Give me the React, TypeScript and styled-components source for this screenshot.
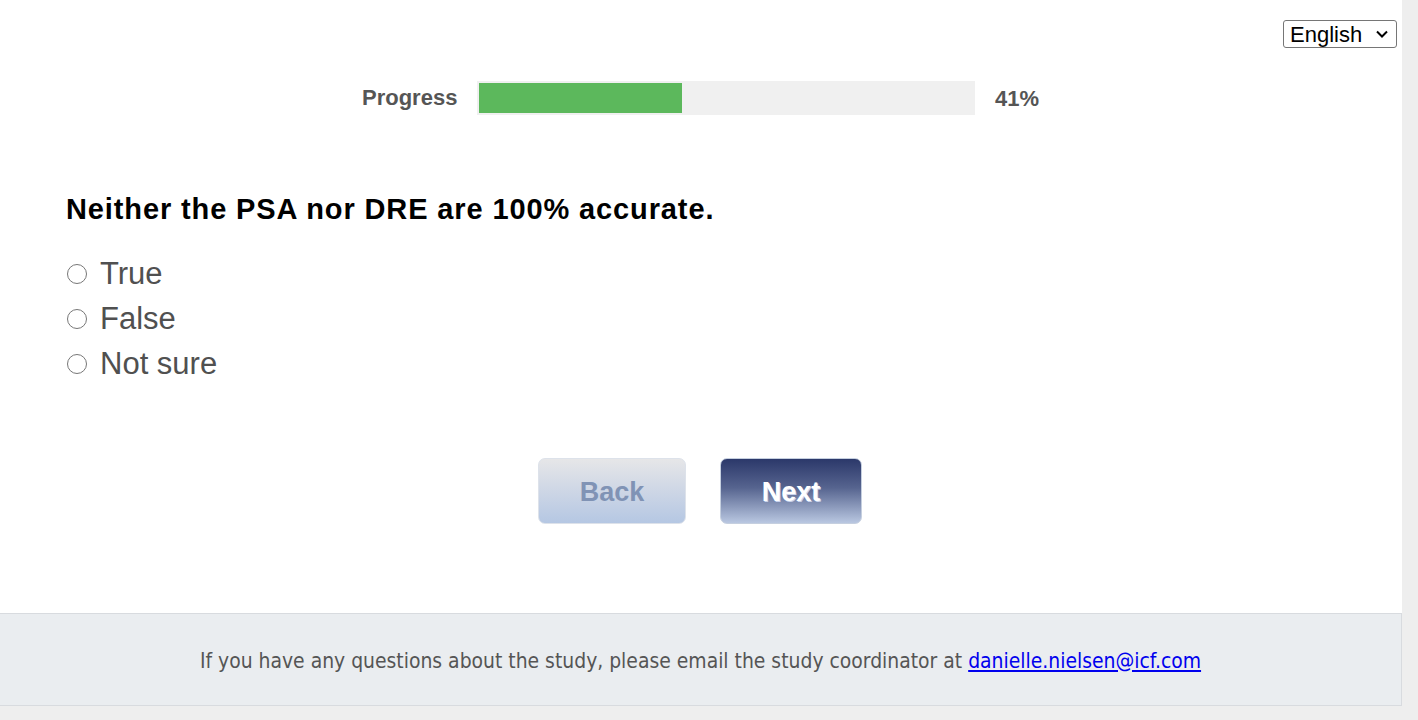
import React from "react";
import styled, { createGlobalStyle } from "styled-components";

const Global = createGlobalStyle`
  html, body { margin: 0; padding: 0; background: #eeeeee; }
  body { font-family: "Liberation Sans", Arial, sans-serif; }
`;

const Page = styled.div`
  width: 1402px;
  background: #ffffff;
`;

const Main = styled.div`
  height: 613px;
  display: flex;
  flex-direction: column;
`;

const TopBar = styled.div`
  display: flex;
  justify-content: flex-end;
  padding: 20px 5px 0 0;
`;

const SelectWrap = styled.div`
  position: relative;
  width: 114px;
  height: 28px;
`;

const LangSelect = styled.select`
  appearance: none;
  -webkit-appearance: none;
  font-family: "Liberation Sans", Arial, sans-serif;
  font-size: 22px;
  height: 28px;
  width: 114px;
  border: 1px solid #767676;
  border-radius: 3px;
  background: #fff;
  color: #000;
  padding: 0 0 0 6px;
  outline: none;
`;

const Chevron = styled.svg`
  position: absolute;
  right: 8px;
  top: 9px;
  width: 14px;
  height: 10px;
  pointer-events: none;
`;

const ProgressRow = styled.div`
  display: flex;
  align-items: center;
  margin: 33px 0 0 362px;
`;

const ProgressLabel = styled.span`
  font-size: 22px;
  font-weight: bold;
  color: #555;
  width: 115px;
`;

const Track = styled.div`
  width: 494px;
  height: 30px;
  padding: 2px;
  background: #f0f0f0;
`;

const Fill = styled.div`
  height: 100%;
  background: #5cb85c;
`;

const Percent = styled.span`
  font-size: 22px;
  font-weight: bold;
  color: #555;
  margin-left: 20px;
  margin-top: 1px;
`;

const Question = styled.h2`
  margin: 78px 0 0 66px;
  font-size: 29px;
  letter-spacing: 0.88px;
  font-weight: bold;
  color: #000;
  line-height: 32px;
`;

const Options = styled.div`
  margin: 26px 0 0 67px;
  display: flex;
  flex-direction: column;
`;

const Option = styled.label`
  display: flex;
  align-items: center;
  height: 45px;
  font-size: 31px;
  color: #505050;
  cursor: pointer;
`;

const Radio = styled.span`
  width: 20px;
  height: 20px;
  border: 1.5px solid #777;
  border-radius: 50%;
  box-sizing: border-box;
  margin-right: 13px;
  margin-top: 1px;
  flex: none;
`;

const Buttons = styled.div`
  display: flex;
  justify-content: center;
  gap: 34px;
  margin: 72px 0 0 0;
  padding-right: 2px;
`;

const NavButton = styled.button<{ $primary?: boolean }>`
  width: ${(p) => (p.$primary ? "142px" : "148px")};
  height: 66px;
  border-radius: 7px;
  border: 1px solid ${(p) => (p.$primary ? "#c5cfdf" : "#dde2ea")};
  font-family: "Liberation Sans", Arial, sans-serif;
  font-size: 27px;
  font-weight: bold;
  background: ${(p) =>
    p.$primary
      ? "linear-gradient(to bottom, #2b386a 0%, #56648f 45%, #b9c7e1 100%)"
      : "linear-gradient(to bottom, #e6e6e8 0%, #b5c7e3 100%)"};
  color: ${(p) => (p.$primary ? "#ffffff" : "#8093b5")};
  text-shadow: ${(p) => (p.$primary ? "1px 1px 0 #c9d3ec" : "none")};
  padding: 3px 0 0 0;
`;

const Footer = styled.footer`
  height: 93px;
  box-sizing: border-box;
  background: #eaedf0;
  border-top: 1px solid #d8dbdf;
  border-bottom: 1px solid #d8dbdf;
  border-right: 1px solid #d8dbdf;
  display: flex;
  align-items: center;
  justify-content: center;
  font-family: "DejaVu Sans Condensed", "DejaVu Sans", sans-serif;
  font-size: 20.9px;
  color: #555;
  padding-top: 2px;
`;

const Mail = styled.a`
  color: #0000ee;
  text-decoration: underline;
  margin-left: 6px;
`;

export default function App() {
  const options = ["True", "False", "Not sure"];
  return (
    <>
      <Global />
      <Page>
        <Main>
          <TopBar>
            <SelectWrap>
              <LangSelect defaultValue="English">
                <option>English</option>
              </LangSelect>
              <Chevron viewBox="0 0 14 10">
                <path d="M2 2.5 L7 7.5 L12 2.5" fill="none" stroke="#000" strokeWidth="2" />
              </Chevron>
            </SelectWrap>
          </TopBar>
          <ProgressRow>
            <ProgressLabel>Progress</ProgressLabel>
            <Track>
              <Fill style={{ width: "41%" }} />
            </Track>
            <Percent>41%</Percent>
          </ProgressRow>
          <Question>Neither the PSA nor DRE are 100% accurate.</Question>
          <Options>
            {options.map((o) => (
              <Option key={o}>
                <Radio />
                {o}
              </Option>
            ))}
          </Options>
          <Buttons>
            <NavButton>Back</NavButton>
            <NavButton $primary>Next</NavButton>
          </Buttons>
        </Main>
        <Footer>
          If you have any questions about the study, please email the study coordinator at
          <Mail href="#">danielle.nielsen@icf.com</Mail>
        </Footer>
      </Page>
    </>
  );
}
